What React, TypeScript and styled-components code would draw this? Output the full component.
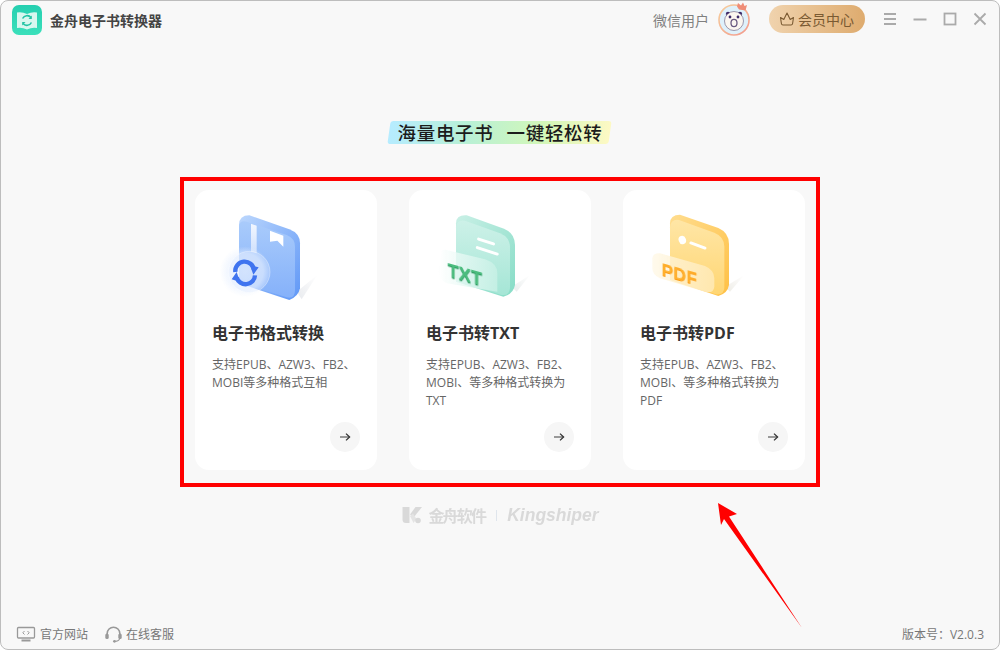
import React from 'react';
import styled, { createGlobalStyle } from 'styled-components';

const FONT = '"Open Sans", "Noto Sans CJK SC", sans-serif';

const GlobalStyle = createGlobalStyle`
  html, body {
    margin: 0;
    padding: 0;
    background: #fff;
  }
  * {
    box-sizing: border-box;
  }
`;

const Window = styled.div`
  position: relative;
  display: flex;
  flex-direction: column;
  width: 1000px;
  height: 650px;
  overflow: hidden;
  background: #f8f8f8;
  border: 1px solid #bdbdbd;
  border-radius: 8px;
  font-family: ${FONT};
`;

const TitleBar = styled.header`
  display: flex;
  align-items: center;
  height: 38px;
  flex-shrink: 0;
  padding: 0 12px 0 11px;
`;

const AppName = styled.span`
  margin-left: 8px;
  font-size: 14px;
  font-weight: 700;
  color: #444;
`;

const UserName = styled.span`
  margin-left: auto;
  font-size: 14px;
  color: #808080;
`;

const Avatar = styled.svg`
  width: 36px;
  height: 36px;
  margin-left: 8px;
`;

const VipButton = styled.button`
  display: flex;
  align-items: center;
  gap: 3px;
  width: 96px;
  height: 28px;
  margin-left: 16px;
  margin-top: -2px;
  padding: 0 0 0 10px;
  border: none;
  border-radius: 14px;
  background: linear-gradient(90deg, #f0d3ae, #deab6e);
  color: #7a5a32;
  font-family: ${FONT};
  font-size: 14px;
`;

const WindowControls = styled.div`
  display: flex;
  align-items: center;
  gap: 16px;
  margin-left: 18px;
  margin-top: -2px;
`;

const ControlIcon = styled.svg`
  display: block;
  width: 14px;
  height: 14px;
  fill: none;
  stroke: #aaa;
  stroke-width: 1.8;
`;

const Main = styled.main`
  flex: 1;
  display: flex;
  flex-direction: column;
  align-items: center;
`;

const Slogan = styled.h1`
  position: relative;
  display: flex;
  gap: 13px;
  margin: 82px 0 0;
  padding: 0 8px;
  height: 23px;
  font-size: 18.5px;
  line-height: 23px;
  font-weight: 500;
  letter-spacing: 0.7px;
  color: #1c1c1c;
  z-index: 0;

  &::before {
    content: '';
    position: absolute;
    inset: 0;
    z-index: -1;
    border-radius: 3px;
    transform: skewX(-8deg);
    background: linear-gradient(90deg, #b6ecff, #b8f0d6 35%, #d3f7b8 70%, #fdf9c4);
  }
`;

const Frame = styled.section`
  display: flex;
  gap: 32px;
  width: 640px;
  height: 310px;
  margin-top: 33px;
  padding: 9px 11px 13px;
  border: 4px solid #f00;
`;

const Card = styled.article`
  display: flex;
  flex-direction: column;
  width: 182px;
  padding: 0 17px 18px;
  background: #fff;
  border-radius: 14px;
`;

const Art = styled.svg`
  flex-shrink: 0;
  width: 182px;
  height: 130px;
  margin: 0 -17px;
  filter: blur(0.3px);
`;

const CardTitle = styled.h2`
  margin: 2px 0 0;
  font-size: 16px;
  line-height: 22px;
  font-weight: 700;
  color: #333;
`;

const CardText = styled.p`
  margin: 12px 0 0;
  font-size: 12px;
  line-height: 18px;
  color: #666;
`;

const ArrowButton = styled.button`
  display: flex;
  align-items: center;
  justify-content: center;
  align-self: flex-end;
  width: 30px;
  height: 30px;
  margin-top: auto;
  padding: 0;
  border: none;
  border-radius: 50%;
  background: #f6f6f6;
`;

const Watermark = styled.div`
  display: flex;
  align-items: center;
  margin-top: 16px;
  margin-left: 1px;
  color: #d9d9d9;
  filter: blur(0.4px);
`;

const WatermarkCn = styled.span`
  margin-left: 6px;
  font-size: 16px;
  font-weight: 700;
  letter-spacing: -1.8px;
`;

const WatermarkBar = styled.span`
  width: 1px;
  height: 11px;
  margin: 0 10px 0 11px;
  background: #dfe5ec;
`;

const WatermarkEn = styled.span`
  font-family: "Liberation Sans", sans-serif;
  font-size: 17.5px;
  font-weight: 700;
  font-style: italic;
`;

const Footer = styled.footer`
  display: flex;
  align-items: center;
  height: 30px;
  flex-shrink: 0;
  padding: 0 15px;
  font-size: 12px;
  color: #777;
`;

const FooterLink = styled.a`
  display: flex;
  align-items: center;
  gap: 4px;
  margin-right: 17px;
`;

const Version = styled.span`
  margin-left: auto;
`;

const ArrowOverlay = styled.svg`
  position: absolute;
  left: 699px;
  top: 489px;
  width: 120px;
  height: 150px;
`;

const LogoIcon = () => (
  <svg width="30" height="30" viewBox="0 0 30 30">
    <defs>
      <linearGradient id="logoBg" x1="0" y1="0" x2="0" y2="1">
        <stop offset="0" stopColor="#25cfb0" />
        <stop offset="1" stopColor="#3be0bb" />
      </linearGradient>
    </defs>
    <rect width="30" height="30" rx="7" fill="url(#logoBg)" />
    <path d="M5 7.5 Q10 6.5 15 9 Q20 6.5 25 7.5 V23 Q20 22 15 24.5 Q10 22 5 23 Z" fill="#d8f7ef" />
    <path d="M19 12.5 A5 5 0 0 0 10.6 13.5" fill="none" stroke="#22c3a4" strokeWidth="1.6" />
    <path d="M11 18.5 A5 5 0 0 0 19.4 17.5" fill="none" stroke="#22c3a4" strokeWidth="1.6" />
    <path d="M19.8 10.5 V14 H16.5 Z M10.2 20.5 V17 H13.5 Z" fill="#22c3a4" />
  </svg>
);

const AvatarIcon = () => (
  <Avatar viewBox="0 0 36 36">
    <defs>
      <linearGradient id="ring" x1="0" y1="0" x2="1" y2="1">
        <stop offset="0" stopColor="#f7cf9c" />
        <stop offset="1" stopColor="#f29a8e" />
      </linearGradient>
    </defs>
    <circle cx="17" cy="18" r="15" fill="#dff1fb" stroke="url(#ring)" strokeWidth="1.6" />
    <circle cx="11" cy="12" r="2.2" fill="#3d2a6a" />
    <circle cx="23" cy="12" r="2.2" fill="#3d2a6a" />
    <circle cx="17" cy="19" r="9.5" fill="#fbf6f0" stroke="#4b3a60" strokeWidth="0.5" />
    <circle cx="13" cy="15" r="1.4" fill="#3d2a6a" />
    <circle cx="21" cy="15" r="1.4" fill="#3d2a6a" />
    <ellipse cx="17" cy="21" rx="3" ry="3.6" fill="none" stroke="#6a5a80" strokeWidth="1.3" />
    <path d="M20 4.5 L21 1 L24 3.5 L26 0.5 L27.5 4 L30 3 L28.5 8.5 L22 7.5 Z" fill="#ef8d77" />
  </Avatar>
);

const CrownIcon = () => (
  <svg width="16" height="14" viewBox="0 0 16 14" fill="none" stroke="#7a5a32" strokeWidth="1.1" strokeLinejoin="round">
    <path d="M1.5 5.5 L4.8 7.5 L8 1 L11.2 7.5 L14.5 5.5 L13.6 11.5 Q13.4 13 12 13 H4 Q2.6 13 2.4 11.5 Z" />
  </svg>
);

const SideArrow = () => (
  <svg width="12" height="10" viewBox="0 0 12 10" fill="none" stroke="#333" strokeWidth="1.3">
    <path d="M1 5 H10.5" stroke="#666" />
    <path d="M7 1.6 L10.6 5 L7 8.4" />
  </svg>
);

const BookArt = () => (
  <Art viewBox="15 0 546 390">
    <defs>
      <linearGradient id="bookSide" x1="0" y1="0" x2="1" y2="1">
        <stop offset="0" stopColor="#bcd7fd" />
        <stop offset="1" stopColor="#5f97f6" />
      </linearGradient>
      <linearGradient id="bookFace" x1="0" y1="0" x2="0" y2="1">
        <stop offset="0" stopColor="#a9cbfb" />
        <stop offset="1" stopColor="#85b1fa" />
      </linearGradient>
      <linearGradient id="bookShade" x1="0" y1="1" x2="1" y2="0">
        <stop offset="0" stopColor="#e8eaee" />
        <stop offset="1" stopColor="#ffffff" />
      </linearGradient>
      <linearGradient id="bookSpine" x1="0" y1="0" x2="0" y2="1">
        <stop offset="0" stopColor="#f2f7ff" />
        <stop offset="1" stopColor="#cfe0fc" />
      </linearGradient>
      <radialGradient id="bookGlass">
        <stop offset="0" stopColor="#eaf2ff" stopOpacity="0.7" />
        <stop offset="0.72" stopColor="#eaf2ff" stopOpacity="0.55" />
        <stop offset="1" stopColor="#eaf2ff" stopOpacity="0" />
      </radialGradient>
    </defs>
    <path d="M320 305 L382 255 L335 328 Z" fill="url(#bookShade)" />
    <path d="M147 105 Q147 76 178 76 L298 118 Q330 130 330 160 V295 Q325 320 298 330 L147 280 Z" fill="url(#bookSide)" />
    <path d="M147 112 Q147 90 170 95 L290 135 Q315 145 315 170 V300 Q315 328 290 322 L170 285 Q147 278 147 260 Z" fill="url(#bookFace)" />
    <path d="M183 101 L200 107 V190 L183 185 Z" fill="url(#bookSpine)" />
    <path d="M240 122 L280 137 V170 L262 152 L240 155 Z" fill="#fff" />
    <circle cx="165" cy="245" r="76" fill="url(#bookGlass)" />
    <circle cx="178" cy="246" r="62" fill="#d9e7ff" fillOpacity="0.3" stroke="#fff" strokeOpacity="0.5" strokeWidth="2" />
    <g fill="none" stroke="#3f74ef" strokeWidth="13">
      <path d="M192 240 A28 28 0 0 0 136 246" />
      <path d="M140 262 A28 28 0 0 0 195 256" />
    </g>
    <path d="M180 226 L206 232 L190 254 Z M150 276 L125 268 L140 246 Z" fill="#3f74ef" />
  </Art>
);

const TxtArt = () => (
  <Art viewBox="-3 0 546 390">
    <defs>
      <linearGradient id="txtSide" x1="0" y1="0" x2="1" y2="1">
        <stop offset="0" stopColor="#c9f0e6" />
        <stop offset="1" stopColor="#86dcc6" />
      </linearGradient>
      <linearGradient id="txtFace" x1="0" y1="0" x2="0" y2="1">
        <stop offset="0" stopColor="#cdf1e8" />
        <stop offset="1" stopColor="#a5e6d6" />
      </linearGradient>
      <linearGradient id="txtGlass" x1="1" y1="0.5" x2="0" y2="0.5">
        <stop offset="0" stopColor="#c6f0e5" stopOpacity="0.9" />
        <stop offset="1" stopColor="#ffffff" stopOpacity="0.7" />
      </linearGradient>
      <linearGradient id="txtShade" x1="0" y1="1" x2="1" y2="0">
        <stop offset="0" stopColor="#e8ecec" />
        <stop offset="1" stopColor="#ffffff" />
      </linearGradient>
    </defs>
    <path d="M305 290 L360 255 L320 305 Z" fill="url(#txtShade)" />
    <path d="M138 100 Q138 74 170 76 L282 116 Q315 130 315 165 V285 Q310 312 280 320 L138 275 Z" fill="url(#txtSide)" />
    <path d="M138 112 Q140 88 165 92 L270 130 Q300 142 300 172 V290 Q300 318 275 315 L138 270 Z" fill="url(#txtFace)" />
    <rect x="200" y="150" width="56" height="9" rx="4.5" fill="#fff" transform="rotate(18 228 155)" />
    <rect x="196" y="178" width="72" height="9" rx="4.5" fill="#fff" transform="rotate(18 232 182)" />
    <path d="M95 185 Q95 178 110 180 L225 208 Q262 220 262 250 V305 L110 280 Q85 268 85 240 Z" fill="url(#txtGlass)" />
    <text
      x="0"
      y="0"
      transform="matrix(1 0.28 0 1 113 258)"
      fontFamily='"Liberation Sans", sans-serif'
      fontWeight="700"
      fontSize="55"
      fill="#4cbd7f"
      style={{ filter: 'drop-shadow(0 4px 0 #2f9d63)' }}
    >
      TXT
    </text>
  </Art>
);

const PdfArt = () => (
  <Art viewBox="-6 0 546 390">
    <defs>
      <linearGradient id="pdfSide" x1="0" y1="0" x2="1" y2="1">
        <stop offset="0" stopColor="#ffdd8f" />
        <stop offset="1" stopColor="#ffc044" />
      </linearGradient>
      <linearGradient id="pdfFace" x1="0" y1="0" x2="0" y2="1">
        <stop offset="0" stopColor="#ffe6a6" />
        <stop offset="1" stopColor="#ffd673" />
      </linearGradient>
      <linearGradient id="pdfGlass" x1="1" y1="0.5" x2="0" y2="0.5">
        <stop offset="0" stopColor="#ffe9b4" stopOpacity="0.9" />
        <stop offset="1" stopColor="#fff8e6" stopOpacity="0.75" />
      </linearGradient>
      <linearGradient id="pdfShade" x1="0" y1="1" x2="1" y2="0">
        <stop offset="0" stopColor="#eeece6" />
        <stop offset="1" stopColor="#ffffff" />
      </linearGradient>
    </defs>
    <path d="M300 290 L358 255 L315 305 Z" fill="url(#pdfShade)" />
    <path d="M135 100 Q135 74 165 74 L280 114 Q312 128 312 162 V285 Q308 310 280 318 L135 270 Z" fill="url(#pdfSide)" />
    <path d="M135 112 Q137 86 162 90 L268 128 Q298 140 298 170 V290 Q298 316 272 313 L135 268 Z" fill="url(#pdfFace)" />
    <ellipse cx="172" cy="150" rx="11" ry="13" fill="#fff" transform="rotate(-20 172 150)" />
    <rect x="192" y="162" width="54" height="9" rx="4.5" fill="#fff" transform="rotate(20 219 166)" />
    <path d="M82 205 Q84 188 105 190 L240 228 Q268 240 268 265 V290 Q265 312 240 305 L105 265 Q82 255 82 235 Z" fill="url(#pdfGlass)" />
    <text
      x="0"
      y="0"
      transform="matrix(1 0.28 0 1 110 255)"
      fontFamily='"Liberation Sans", sans-serif'
      fontWeight="700"
      fontSize="52"
      letterSpacing="1"
      fill="#ffb02e"
      style={{ filter: 'drop-shadow(0 3px 0 #fb9a12)' }}
    >
      PDF
    </text>
  </Art>
);

const cards = [
  { title: '电子书格式转换', text: '支持EPUB、AZW3、FB2、MOBI等多种格式互相', art: <BookArt /> },
  { title: '电子书转TXT', text: '支持EPUB、AZW3、FB2、MOBI、等多种格式转换为TXT', art: <TxtArt /> },
  { title: '电子书转PDF', text: '支持EPUB、AZW3、FB2、MOBI、等多种格式转换为PDF', art: <PdfArt /> },
];

const App: React.FC = () => {
  return (
    <>
      <GlobalStyle />
      <Window>
        <TitleBar>
          <LogoIcon />
          <AppName>金舟电子书转换器</AppName>
          <UserName>微信用户</UserName>
          <AvatarIcon />
          <VipButton>
            <CrownIcon />
            会员中心
          </VipButton>
          <WindowControls>
            <ControlIcon viewBox="0 0 14 14">
              <path d="M1 2 H13 M1 7 H13 M1 12 H13" />
            </ControlIcon>
            <ControlIcon viewBox="0 0 14 14">
              <path d="M0.5 7.5 H13.5" />
            </ControlIcon>
            <ControlIcon viewBox="0 0 14 14">
              <rect x="1.5" y="1.5" width="11" height="11" />
            </ControlIcon>
            <ControlIcon viewBox="0 0 14 14">
              <path d="M1.5 1.5 L12.5 12.5 M12.5 1.5 L1.5 12.5" />
            </ControlIcon>
          </WindowControls>
        </TitleBar>

        <Main>
          <Slogan>
            <span>海量电子书</span>
            <span>一键轻松转</span>
          </Slogan>
          <Frame>
            {cards.map((card) => (
              <Card key={card.title}>
                {card.art}
                <CardTitle>{card.title}</CardTitle>
                <CardText>{card.text}</CardText>
                <ArrowButton>
                  <SideArrow />
                </ArrowButton>
              </Card>
            ))}
          </Frame>
          <Watermark>
            <svg width="20" height="18" viewBox="0 0 20 18">
              <path d="M0.5 1 H7.5 V17 H4 Q0.5 17 0.5 13.5 Z" fill="#d9d9d9" />
              <path d="M8 8.5 L13.5 1 H20 L12 11 Z" fill="#d9d9d9" />
              <path d="M8 10 L11 7.5 L14.5 13 L11.5 17 Z" fill="#e4e4e4" />
              <circle cx="16" cy="14.5" r="2.8" fill="#d9d9d9" />
            </svg>
            <WatermarkCn>金舟软件</WatermarkCn>
            <WatermarkBar />
            <WatermarkEn>Kingshiper</WatermarkEn>
          </Watermark>
        </Main>

        <Footer>
          <FooterLink>
            <svg width="20" height="16" viewBox="0 0 20 16" fill="none" stroke="#999" strokeWidth="1.3">
              <rect x="1.5" y="1.5" width="17" height="10.5" rx="1" />
              <path d="M5.5 14.5 H14.5" strokeWidth="2" />
              <path d="M8.5 5 L6.8 6.8 L8.5 8.5 M11.5 5 L13.2 6.8 L11.5 8.5" strokeWidth="1" />
            </svg>
            官方网站
          </FooterLink>
          <FooterLink>
            <svg width="17" height="17" viewBox="0 0 17 17" fill="none" stroke="#999" strokeWidth="1.6">
              <path d="M2.2 10 V7.5 A6.3 6.3 0 0 1 14.8 7.5 V10" />
              <rect x="0.3" y="7.5" width="3.4" height="5.5" rx="1.5" fill="#999" stroke="none" />
              <rect x="13.3" y="7.5" width="3.4" height="5.5" rx="1.5" fill="#999" stroke="none" />
              <path d="M14.8 12 Q14.3 15 10.5 15.3" strokeWidth="1.2" />
              <circle cx="9.5" cy="15.3" r="1.4" fill="#999" stroke="none" />
            </svg>
            在线客服
          </FooterLink>
          <Version>版本号：V2.0.3</Version>
        </Footer>

        <ArrowOverlay viewBox="699 489 120 150">
          <path d="M717 502 L736 513 L728 515.5 L801 627 L723 518 L720 524 Z" fill="#f00" />
        </ArrowOverlay>
      </Window>
    </>
  );
};

export default App;
